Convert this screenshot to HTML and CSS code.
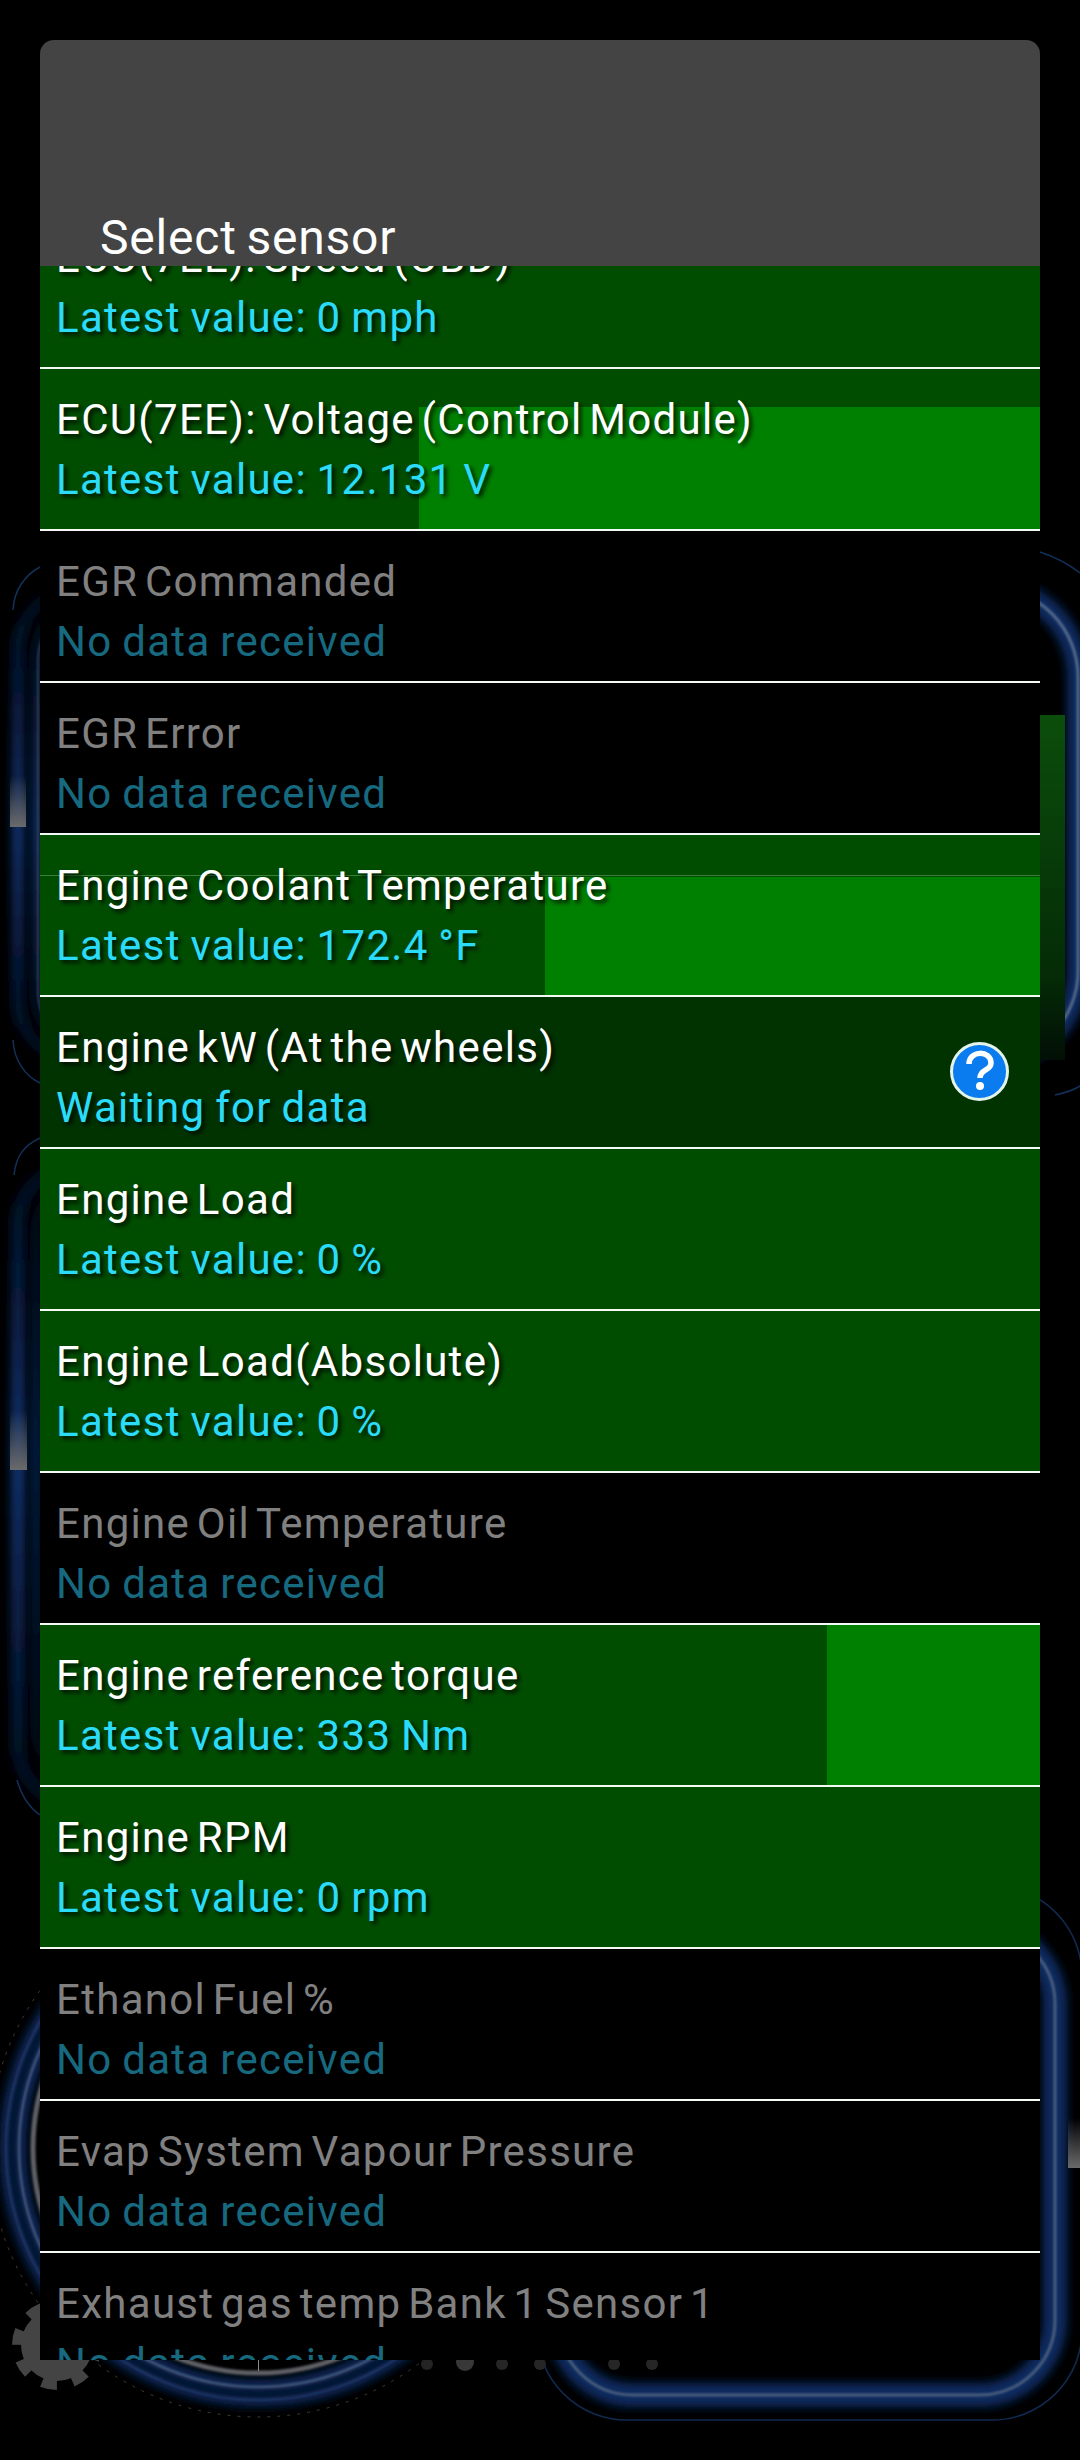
FILE: index.html
```html
<!DOCTYPE html>
<html lang="en">
<head>
    <meta charset="UTF-8">
    <meta name="viewport" content="width=device-width, initial-scale=1.0">
    <title>Select sensor</title>
    <link rel="stylesheet" href="styles.css">
</head>
<body>
    <!-- Dimmed dashboard behind the dialog -->
    <svg class="backdrop" width="1080" height="2460" viewBox="0 0 1080 2460" aria-hidden="true">
        <defs>
            <filter id="glow" x="-20%" y="-20%" width="140%" height="140%"><feGaussianBlur stdDeviation="5"/></filter>
            <filter id="soft" x="-20%" y="-20%" width="140%" height="140%"><feGaussianBlur stdDeviation="1.2"/></filter>
            <linearGradient id="fade-a" gradientUnits="userSpaceOnUse" x1="0" y1="580" x2="0" y2="1070">
                <stop offset="0" stop-color="#030a18"/>
                <stop offset="0.5" stop-color="#0b3474"/>
                <stop offset="1" stop-color="#030a18"/>
            </linearGradient>
            <linearGradient id="fade-d" gradientUnits="userSpaceOnUse" x1="0" y1="1150" x2="0" y2="1820">
                <stop offset="0" stop-color="#030a18"/>
                <stop offset="0.45" stop-color="#0b3474"/>
                <stop offset="1" stop-color="#030a18"/>
            </linearGradient>
            <linearGradient id="spot" x1="0" y1="0" x2="0" y2="1">
                <stop offset="0" stop-color="#6a6a6a" stop-opacity="0"/>
                <stop offset="1" stop-color="#6a6a6a"/>
            </linearGradient>
            <linearGradient id="green-bar" x1="0" y1="0" x2="0" y2="1">
                <stop offset="0" stop-color="#0b4d0b"/>
                <stop offset="0.75" stop-color="#042c06"/>
                <stop offset="1" stop-color="#020f06"/>
            </linearGradient>
        </defs>

        <!-- left column, upper gauge -->
        <rect x="18" y="590" width="300" height="470" rx="60" fill="none" stroke="url(#fade-a)" stroke-width="12" filter="url(#glow)"/>
        <rect x="36" y="590" width="300" height="470" rx="70" fill="none" stroke="url(#fade-a)" stroke-width="8" filter="url(#glow)"/>
        <rect x="38" y="592" width="300" height="468" rx="70" fill="none" stroke="#3c4f6c" stroke-width="1.5" filter="url(#soft)"/>
        <path d="M40 567C25 575 14 590 13 610" fill="none" stroke="#123058" stroke-width="1.5"/>
        <path d="M13 1040C14 1060 25 1076 40 1083" fill="none" stroke="#123058" stroke-width="1.5"/>
        <rect x="10" y="775" width="16" height="52" fill="url(#spot)"/>

        <!-- left column, lower gauge -->
        <rect x="18" y="1165" width="300" height="640" rx="60" fill="none" stroke="url(#fade-d)" stroke-width="14" filter="url(#glow)"/>
        <rect x="36" y="1165" width="300" height="630" rx="70" fill="none" stroke="url(#fade-d)" stroke-width="6" filter="url(#glow)"/>
        <path d="M40 1138C25 1145 16 1155 14 1175" fill="none" stroke="#123058" stroke-width="1.5"/>
        <path d="M17 1780C22 1798 30 1808 40 1815" fill="none" stroke="#123058" stroke-width="1.5"/>
        <rect x="10" y="1410" width="17" height="60" fill="url(#spot)"/>

        <!-- right column, upper gauge -->
        <rect x="700" y="587" width="378" height="474" rx="90" fill="none" stroke="#0a2a60" stroke-width="22" filter="url(#glow)"/>
        <rect x="700" y="587" width="378" height="474" rx="90" fill="none" stroke="#566a88" stroke-width="3" filter="url(#soft)"/>
        <path d="M1040 552C1055 557 1070 565 1080 573" fill="none" stroke="#123058" stroke-width="1.5"/>
        <path d="M1055 1095C1065 1093 1072 1091 1080 1086" fill="none" stroke="#123058" stroke-width="1.5"/>
        <rect class="backdrop-green" x="1040" y="715" width="25" height="345" fill="url(#green-bar)"/>

        <!-- bottom round gauge -->
        <circle cx="258" cy="2148" r="253" fill="none" stroke="#092a60" stroke-width="10" filter="url(#glow)"/>
        <circle cx="258" cy="2148" r="238" fill="none" stroke="#092a60" stroke-width="12" filter="url(#glow)"/>
        <circle cx="258" cy="2148" r="239" fill="none" stroke="#44597c" stroke-width="2.5" filter="url(#soft)"/>
        <circle cx="258" cy="2148" r="252" fill="none" stroke="#223c6a" stroke-width="2" filter="url(#soft)"/>
        <circle cx="258" cy="2148" r="225" fill="none" stroke="#5e6166" stroke-width="5" filter="url(#soft)"/>
        <circle cx="258" cy="2148" r="269" fill="none" stroke="#3c3c34" stroke-width="1" stroke-dasharray="3 7"/>
        <rect x="258" y="2355" width="1" height="16" fill="#8a8a8a"/>

        <!-- bottom right gauge -->
        <rect x="558" y="1929" width="497" height="466" rx="75" fill="none" stroke="#092a60" stroke-width="24" filter="url(#glow)"/>
        <rect x="558" y="1929" width="497" height="466" rx="75" fill="none" stroke="#4c5f7c" stroke-width="3" filter="url(#soft)"/>
        <rect x="537" y="1886" width="545" height="534" rx="90" fill="none" stroke="#102a50" stroke-width="1.5"/>
        <rect x="1068" y="2118" width="12" height="50" fill="url(#spot)"/>

        <!-- settings gear and page dots -->
        <circle cx="57" cy="2345" r="36" fill="#444"/>
        <circle cx="57" cy="2345" r="34" fill="none" stroke="#444" stroke-width="22" stroke-dasharray="13 13.7"/>
        <circle cx="427" cy="2364" r="6" fill="#242424"/>
        <circle cx="465" cy="2362" r="9" fill="#383838"/>
        <circle cx="502" cy="2364" r="6" fill="#262626"/>
        <circle cx="540" cy="2364" r="6" fill="#262626"/>
        <circle cx="614" cy="2364" r="6" fill="#262626"/>
        <circle cx="652" cy="2364" r="6" fill="#262626"/>
    </svg>

    <div class="dialog">
        <div class="dialog-title">Select sensor</div>
        <div class="sensor-list">
            <div class="sensor sensor-live sensor-first">
                <div class="sensor-name">ECU(7EE): Speed (OBD)</div>
                <div class="sensor-value">Latest value: 0 mph</div>
            </div>
            <div class="sensor sensor-live">
                <div class="bar" style="width: 62.1%; height: 122px"></div>
                <div class="sensor-name">ECU(7EE): Voltage (Control Module)</div>
                <div class="sensor-value">Latest value: 12.131 V</div>
            </div>
            <div class="sensor sensor-off">
                <div class="sensor-name">EGR Commanded</div>
                <div class="sensor-value">No data received</div>
            </div>
            <div class="sensor sensor-off">
                <div class="sensor-name">EGR Error</div>
                <div class="sensor-value">No data received</div>
            </div>
            <div class="sensor sensor-live">
                <div class="bar-line"></div>
                <div class="bar" style="width: 49.5%; height: 118px"></div>
                <div class="sensor-name">Engine Coolant Temperature</div>
                <div class="sensor-value">Latest value: 172.4 °F</div>
            </div>
            <div class="sensor sensor-wait">
                <div class="sensor-name">Engine kW (At the wheels)</div>
                <div class="sensor-value">Waiting for data</div>
                <svg class="help-icon" width="59" height="59" viewBox="0 0 59 59" aria-hidden="true">
                    <circle cx="29.5" cy="29.5" r="28" fill="#0b7bf0" stroke="#e4f4e8" stroke-width="3"/>
                    <path d="M19 22C19 8 41 8 41 21C41 29 30 27 30 36" fill="none" stroke="#fff" stroke-width="5.5"/>
                    <circle cx="30" cy="44" r="4" fill="#fff"/>
                </svg>
            </div>
            <div class="sensor sensor-live">
                <div class="sensor-name">Engine Load</div>
                <div class="sensor-value">Latest value: 0 %</div>
            </div>
            <div class="sensor sensor-live">
                <div class="sensor-name">Engine Load(Absolute)</div>
                <div class="sensor-value">Latest value: 0 %</div>
            </div>
            <div class="sensor sensor-off">
                <div class="sensor-name">Engine Oil Temperature</div>
                <div class="sensor-value">No data received</div>
            </div>
            <div class="sensor sensor-live">
                <div class="bar" style="width: 21.3%; height: 100%"></div>
                <div class="sensor-name">Engine reference torque</div>
                <div class="sensor-value">Latest value: 333 Nm</div>
            </div>
            <div class="sensor sensor-live">
                <div class="sensor-name">Engine RPM</div>
                <div class="sensor-value">Latest value: 0 rpm</div>
            </div>
            <div class="sensor sensor-off">
                <div class="sensor-name">Ethanol Fuel %</div>
                <div class="sensor-value">No data received</div>
            </div>
            <div class="sensor sensor-off">
                <div class="sensor-name">Evap System Vapour Pressure</div>
                <div class="sensor-value">No data received</div>
            </div>
            <div class="sensor sensor-off">
                <div class="sensor-name">Exhaust gas temp Bank 1 Sensor 1</div>
                <div class="sensor-value">No data received</div>
            </div>
        </div>
    </div>
</body>
</html>
```

FILE: styles.css
```css
body {
    margin: 0;
    width: 1080px;
    height: 2460px;
    overflow: hidden;
    position: relative;
    background-color: #000;
    font-family: Roboto, "Liberation Sans", sans-serif;
}
.backdrop {
    position: absolute;
    top: 0;
    left: 0;
}
.dialog {
    position: relative;
    margin: 0 40px;
    padding-top: 40px;
}
.dialog-title {
    height: 226px;
    box-sizing: border-box;
    padding: 170px 0 0 60px;
    background-color: #444;
    border-radius: 14px 14px 0 0;
    color: #fff;
    font-size: 48px;
    line-height: 56px;
    letter-spacing: 0.8px;
    word-spacing: -3px;
    position: relative;
    z-index: 1;
}
.sensor-list {
    height: 2094px;
    overflow: hidden;
}
.sensor {
    position: relative;
    height: 152px;
    box-sizing: border-box;
    padding: 21px 16px 0;
    border-bottom: 2px solid #f4fbf4;
    background-color: #000;
    font-size: 42px;
    line-height: 60px;
    letter-spacing: 1.3px;
    word-spacing: -5px;
    text-shadow: 3px 3px 4px rgba(0,0,0,0.8);
}
.sensor-first {
    margin-top: -59px;
}
.sensor-live {
    height: 162px;
    background-color: #004d00;
}
.sensor-wait {
    background-color: #003300;
}
.sensor-name, .sensor-value {
    position: relative;
    white-space: nowrap;
}
.sensor-name {
    color: #fff;
}
.sensor-value {
    color: #2bdcfa;
    word-spacing: -2px;
}
.sensor-off .sensor-name {
    color: #808080;
}
.sensor-off .sensor-value {
    color: #17697f;
}
.bar {
    position: absolute;
    right: 0;
    bottom: 0;
    background-color: #008000;
}
.bar-line {
    position: absolute;
    top: 40px;
    left: 0;
    width: 100%;
    height: 1px;
    background-color: #3c7c3c;
}
.help-icon {
    position: absolute;
    top: 45px;
    right: 31px;
}
```
